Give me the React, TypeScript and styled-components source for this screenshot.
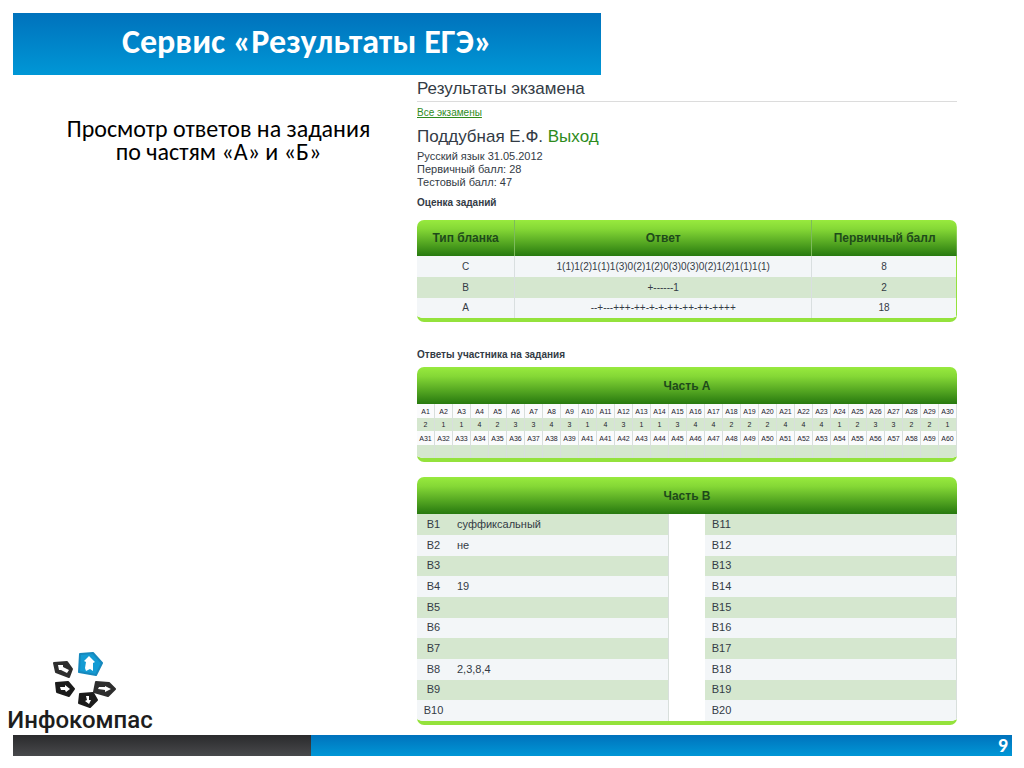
import React from "react";
import styled, { createGlobalStyle } from "styled-components";

const GlobalStyle = createGlobalStyle`
  *, *::before, *::after { box-sizing: border-box; }
  body { margin: 0; background: #fff; }
`;

const slideFont = `Carlito, Calibri, Lato, "Noto Sans", sans-serif`;
const reportFont = `"Liberation Sans", Arial, sans-serif`;
const blue = "linear-gradient(#0072bc, #0097d6)";
const stripe = "#d5e7cf";
const pale = "#f3f6f8";
const lime = "#94e23c";

const Slide = styled.div`
  min-height: 100vh;
  display: flex;
  flex-direction: column;
  padding: 13px 0 12px;
  font-family: ${slideFont};
  color: #000;
`;

const Banner = styled.header`
  width: 58.7%;
  height: 62px;
  padding-left: 13px;
  display: flex;
`;

const Title = styled.h1`
  flex: 1;
  margin: 0;
  padding-bottom: 4px;
  display: flex;
  align-items: center;
  justify-content: center;
  background: ${blue};
  color: #fff;
  font-size: 34px;
  line-height: 40px;
  font-weight: 700;
`;

const Body = styled.main`
  flex: 1;
  display: grid;
  grid-template-columns: 417fr 540fr 67fr;
`;

const Aside = styled.div`
  display: flex;
  flex-direction: column;
  justify-content: space-between;
  padding: 42px 0 3px 8px;
`;

const Caption = styled.p`
  margin: 0;
  padding-left: 12px;
  text-align: center;
  font-size: 24px;
  line-height: 23px;
`;

const Logo = styled.div`
  width: 144px;
  display: flex;
  flex-direction: column;
  align-items: center;
`;

const LogoName = styled.span`
  font-family: Roboto, sans-serif;
  font-size: 24px;
  line-height: 24px;
  font-weight: 500;
  color: #1d1d1d;
`;

const Report = styled.section`
  font-family: ${reportFont};
  font-size: 10px;
  line-height: 14px;
  color: #333b45;
`;

const ReportTitle = styled.h2`
  margin: 0 0 4px;
  height: 27px;
  padding-top: 4px;
  border-bottom: 1px solid #dcdcdc;
  font-size: 17px;
  line-height: 20px;
  font-weight: 400;
`;

const GreenLink = styled.a<{ $plain?: boolean }>`
  color: #2e8b1c;
  text-decoration: ${(p) => (p.$plain ? "none" : "underline")};
`;

const Person = styled.h3`
  margin: 6px 0 2px;
  font-size: 17px;
  line-height: 22px;
  font-weight: 400;
`;

const Fact = styled.p`
  margin: 0;
  font-size: 11px;
  line-height: 13px;
`;

const Label = styled.h4<{ $top: number; $bottom: number }>`
  margin: ${(p) => p.$top}px 0 ${(p) => p.$bottom}px;
  font-size: 10px;
  line-height: 14px;
  font-weight: 700;
`;

const Card = styled.div`
  border-bottom: 4px solid ${lime};
  border-radius: 7px;
  overflow: hidden;
  & + & { margin-top: 15px; }
`;

const Table = styled.table`
  width: 100%;
  border-collapse: separate;
  border-spacing: 0;
  table-layout: fixed;
  text-align: center;
  td, th { padding: 0; }
`;

const Head = styled.thead<{ $height: number }>`
  height: ${(p) => p.$height}px;
  background: linear-gradient(#98ea3e, #85d836 25%, #27790f);
  color: #1e4a1a;
  font-size: 12px;
  th + th { border-left: 1px solid #7dbb5c; }
`;

const ScoreBody = styled.tbody`
  tr { height: 21px; background: ${pale}; }
  tr:nth-child(even) { background: ${stripe}; }
  tr:last-child { height: 20px; }
  td + td { border-left: 1px solid #d9dfe0; }
  td:last-child { border-right: 1px solid ${lime}; }
`;

const PartABody = styled.tbody`
  font-size: 7px;
  line-height: 9px;
  color: #1c222c;
  tr { height: 14px; background: #fafbfc; }
  tr:nth-child(even) { height: 13px; background: ${stripe}; }
  td { border-right: 1px solid #d8dfdc; }
`;

const PartBBody = styled.tbody`
  font-size: 11px;
  tr { height: 21px; }
  tr:nth-child(3n) { height: 20px; }
`;

const BCell = styled.td<{ $odd: boolean; $value?: boolean }>`
  background: ${(p) => (p.$odd ? stripe : pale)};
  text-align: ${(p) => (p.$value ? "left" : "center")};
  border-right: ${(p) => (p.$value ? "1px solid #d8dfdc" : "0")};
  && { padding: 0 0 2px ${(p) => (p.$value ? "7px" : "0")}; }
`;

const Footer = styled.footer`
  height: 21px;
  margin: 0 12px 0 13px;
  display: grid;
  grid-template-columns: 298fr 701fr;
`;

const FooterDark = styled.div`
  background: linear-gradient(#2a2a2c, #48494c);
`;

const PageNumber = styled.div`
  background: ${blue};
  color: #fff;
  text-align: right;
  padding-right: 4px;
  font-size: 20px;
  line-height: 21px;
  font-weight: 700;
`;

const scores = [
  ["C", "1(1)1(2)1(1)1(3)0(2)1(2)0(3)0(3)0(2)1(2)1(1)1(1)", "8"],
  ["B", "+------1", "2"],
  ["A", "--+---+++-++-+-+-++-++-++-++++", "18"],
];

const partA = "211423343143113442224441233221".split("");
const firstA = partA.map((_, i) => `A${i + 1}`);
const secondA = partA.map((_, i) => (i === 9 ? "A41" : `A${i + 31}`));
const partB = ["суффиксальный", "не", "", "19", "", "", "", "2,3,8,4", "", ""];

function CompassMark() {
  return (
    <svg width="72" height="56" viewBox="-8 0 72 56" aria-hidden="true">
      <g strokeLinejoin="round" strokeWidth="2">
        <path fill="#149bd3" stroke="#1688bd" d="M28 2 41 1 50 11 44 23 27 20Z" />
        <path fill="#2e2e2e" stroke="#2e2e2e" d="M2 11 15 10 20 17 17 25 4 20Z" />
        <path fill="#1b1b1b" stroke="#1b1b1b" d="M4 31 16 30 22 37 17 44 5 40Z" />
        <path fill="#2e2e2e" stroke="#2e2e2e" d="M44 30 57 31 63 37 56 44 42 40Z" />
        <path fill="#1b1b1b" stroke="#1b1b1b" d="M28 42 41 41 45 48 38 55 27 51Z" />
      </g>
      <g fill="#fff">
        <path d="M37 4 43 10 41 11 41 19 38 17 34 19 33 16 34 10 32 9Z" />
        <path d="M6 13 11 13 11 15 17 18 15 21 9 18 7 18Z" />
        <path d="M8 35 13 35 13 33 18 37 14 40 13 38 9 38Z" />
        <path d="M47 35 53 35 53 34 59 37 53 40 53 38 46 37Z" />
        <path d="M34 44 37 44 37 48 39 48 37 52 33 49 35 48Z" />
      </g>
    </svg>
  );
}

export default function App() {
  return (
    <Slide>
      <GlobalStyle />
      <Banner>
        <Title>Сервис «Результаты ЕГЭ»</Title>
      </Banner>
      <Body>
        <Aside>
          <Caption>
            Просмотр ответов на задания
            <br />
            по частям «А» и «Б»
          </Caption>
          <Logo>
            <CompassMark />
            <LogoName>Инфокомпас</LogoName>
          </Logo>
        </Aside>
        <Report>
          <ReportTitle>Результаты экзамена</ReportTitle>
          <GreenLink href="#exams">Все экзамены</GreenLink>
          <Person>
            Поддубная Е.Ф. <GreenLink $plain href="#logout">Выход</GreenLink>
          </Person>
          <Fact>Русский язык 31.05.2012</Fact>
          <Fact>Первичный балл: 28</Fact>
          <Fact>Тестовый балл: 47</Fact>
          <Label $top={7} $bottom={10}>Оценка заданий</Label>
          <Card>
            <Table>
              <colgroup>
                <col style={{ width: "18%" }} />
                <col style={{ width: "55%" }} />
                <col />
              </colgroup>
              <Head $height={36}>
                <tr>
                  <th>Тип бланка</th>
                  <th>Ответ</th>
                  <th>Первичный балл</th>
                </tr>
              </Head>
              <ScoreBody>
                {scores.map((row) => (
                  <tr key={row[0]}>
                    {row.map((cell, i) => <td key={i}>{cell}</td>)}
                  </tr>
                ))}
              </ScoreBody>
            </Table>
          </Card>
          <Label $top={26} $bottom={5}>Ответы участника на задания</Label>
          <Card>
            <Table>
              <Head $height={37}>
                <tr><th colSpan={30}>Часть А</th></tr>
              </Head>
              <PartABody>
                <tr>{firstA.map((n, i) => <td key={i}>{n}</td>)}</tr>
                <tr>{partA.map((n, i) => <td key={i}>{n}</td>)}</tr>
                <tr>{secondA.map((n, i) => <td key={i}>{n}</td>)}</tr>
                <tr>{partA.map((_, i) => <td key={i} />)}</tr>
              </PartABody>
            </Table>
          </Card>
          <Card>
            <Table>
              <colgroup>
                <col style={{ width: 33 }} />
                <col />
                <col style={{ width: 36 }} />
                <col style={{ width: 33 }} />
                <col />
              </colgroup>
              <Head $height={37}>
                <tr><th colSpan={5}>Часть В</th></tr>
              </Head>
              <PartBBody>
                {partB.map((value, i) => {
                  const odd = i % 2 === 0;
                  return (
                    <tr key={i}>
                      <BCell $odd={odd}>B{i + 1}</BCell>
                      <BCell $odd={odd} $value>{value}</BCell>
                      <td />
                      <BCell $odd={odd}>B{i + 11}</BCell>
                      <BCell $odd={odd} $value />
                    </tr>
                  );
                })}
              </PartBBody>
            </Table>
          </Card>
        </Report>
      </Body>
      <Footer>
        <FooterDark />
        <PageNumber>9</PageNumber>
      </Footer>
    </Slide>
  );
}
